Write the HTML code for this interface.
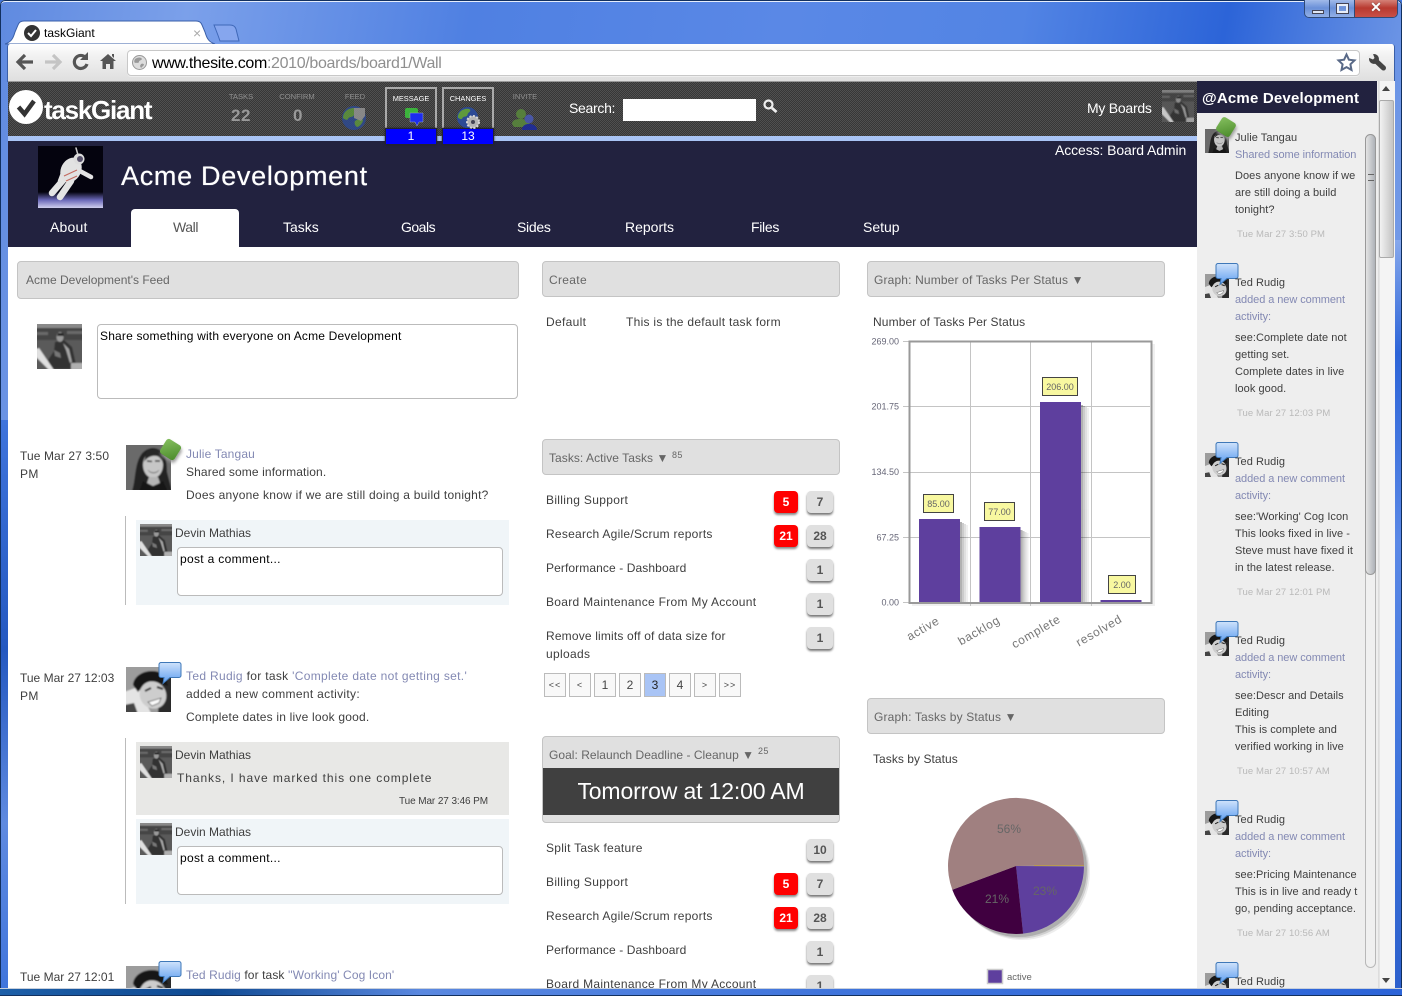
<!DOCTYPE html>
<html lang="en">
<head>
<meta charset="utf-8">
<title>taskGiant</title>
<style>
html,body{margin:0;padding:0;width:1402px;height:996px;overflow:hidden;background:#3f74dc}
*{box-sizing:border-box}
#frame{position:absolute;left:0;top:0;width:1402px;height:996px;overflow:hidden;
 background:linear-gradient(100deg,#5f8ae0 0,#7ba0ea 12%,#4f80e2 30%,#5a88e6 50%,#5284e4 65%,#2c64d8 78%,#6f97e6 90%,#86a8ec 100%);
 border-radius:5px 5px 0 0;box-shadow:inset 0 0 0 1px #12305f,inset 0 2px 0 #e6eefc}
#sideL{position:absolute;left:0;top:420px;width:8px;height:576px;background:linear-gradient(180deg,#3f74dc,#2458c0 40%,#5f8ae0 70%,#3f74dc);border-left:1px solid #12305f}
#sideR{position:absolute;left:1395px;top:240px;width:7px;height:756px;background:linear-gradient(180deg,#86a8ec,#2c64d8 15%,#5a88e6 40%,#3f74dc 70%,#2b5fcc);border-right:1px solid #12305f}
#bottom{position:absolute;left:0;top:988px;width:1402px;height:8px;background:linear-gradient(90deg,#1d5fa8,#0f4a92 15%,#5a88e0 30%,#3f74dc 60%,#2c64d8);border-top:1px solid #c8d0dc;border-bottom:1px solid #12305f}
#clip{position:absolute;left:0;top:0;width:1395px;height:988px;overflow:hidden}
.a{position:absolute}
.t{position:absolute;white-space:nowrap;font:12px/16px "Liberation Sans",sans-serif;letter-spacing:.32px;color:#3e3e3e}
.l{color:#8389b3}
.w{color:#fff}
.k{color:#000}
.g{color:#666}
.h{position:absolute;background:#e0e0e0;border:1px solid #c4c4c4;border-radius:4px}
.ta{position:absolute;background:#fff;border:1px solid #bbb;border-radius:4px}
.b{position:absolute;width:26px;height:22px;border-radius:4px;background:#e0e0e0;box-shadow:0 2px 2px #777;text-align:center;font:bold 12px/22px "Liberation Sans",sans-serif;color:#555}
.r{width:24px;background:#f00;color:#fff;box-shadow:0 2px 2px #888}
.p{position:absolute;top:673px;width:22px;height:24px;background:#f8f8f8;border:1px solid #bbb;text-align:center;font:12px/22px "Liberation Sans",sans-serif;color:#444}
.p.q{font-size:9px;letter-spacing:1px}
.tab{position:absolute;top:219px;font:14px/16px "Liberation Sans",sans-serif;color:#fff;white-space:nowrap}
.nl{position:absolute;top:92px;font:7.6px/9px "Liberation Sans",sans-serif;color:#8f8f8f;text-align:center;width:60px}
.nv{position:absolute;top:107px;font:bold 17px/18px "Liberation Sans",sans-serif;color:#999;text-align:center;width:60px;letter-spacing:.5px}
.box{position:absolute;top:87px;width:52px;height:58px;border:2px solid #aaa;border-bottom:0}
.box span{position:absolute;left:-2px;top:5px;width:52px;text-align:center;font:7.4px/10px "Liberation Sans",sans-serif;color:#fff}
.box b{position:absolute;left:-2px;bottom:0;width:52px;height:17px;background:#00f;border:1px solid #223;color:#fff;font:12px/15px "Liberation Sans",sans-serif;text-align:center;box-shadow:0 0 2px #222}
.d{position:absolute;left:1237px;font:9.5px/12px "Liberation Sans",sans-serif;letter-spacing:.1px;color:#b9b9b9;white-space:nowrap;margin-top:1px}
.s,.m{position:absolute;left:1235px;white-space:nowrap;font:11px/16px "Liberation Sans",sans-serif;letter-spacing:.05px;color:#3e3e3e;margin-top:1px}
.m{color:#8389b3;letter-spacing:-.07px}
svg{position:absolute;overflow:visible}
</style>
</head>
<body>
<svg width="0" height="0" style="position:absolute">
<defs>
<filter id="soft" x="-5%" y="-5%" width="110%" height="110%"><feGaussianBlur stdDeviation=".7"/></filter>
<clipPath id="sq"><rect width="45" height="45"/></clipPath>
<symbol id="devin" viewBox="0 0 45 45">
<g clip-path="url(#sq)"><g filter="url(#soft)">
<rect x="-2" y="-2" width="50" height="50" fill="#5a5a5a"/>
<rect x="-2" y="-2" width="50" height="6" fill="#8a8a8a"/>
<rect x="-2" y="4" width="50" height="12" fill="#444"/>
<path d="M18 18l9-2 8 7 5 22H14l-3-9 6-9z" fill="#303030"/>
<ellipse cx="23" cy="13" rx="3.500" ry="5" fill="#9a9a9a"/>
<path d="M21 9h5l1 3h-7z" fill="#222"/>
<path d="M26 19l6 6 3 13-2 1-4-13z" fill="#a6a6a6"/>
<path d="M17 26l6 3 1 5-6-2z" fill="#777"/>
<path d="M-1 25l3-1 15 22h-5L-1 33z" fill="#e0e0e0"/>
<path d="M34 39h12v7H34z" fill="#b0b0b0"/>
<path d="M-1 8h12v3H-1zM30 7h16v3H30z" fill="#6a6a6a"/>
</g></g>
</symbol>
<symbol id="julie" viewBox="0 0 45 45">
<g clip-path="url(#sq)"><g filter="url(#soft)">
<rect x="-2" y="-2" width="50" height="50" fill="#6a6a6a"/>
<path d="M6 46C11 32 7 6 26 3c14 0 15 14 15 24l5 19z" fill="#222"/>
<ellipse cx="27" cy="20" rx="10" ry="13" fill="#c6c6c6"/>
<path d="M18 17c3-5 10-8 15-5 2 2 3 3 4 6l2-8-8-6-10 2z" fill="#282828"/>
<path d="M21 16l5 .5M29 16h5" stroke="#333" stroke-width="1.600"/>
<path d="M22 25c3 3.500 8 3.500 11 0-2 4-9 4-11 0z" fill="#fff" stroke="#555" stroke-width=".5"/>
<path d="M23 32h9l2 6-7 3-6-3z" fill="#b4b4b4"/>
<path d="M13 47l4-11 10 6 10-6 5 11z" fill="#151515"/>
</g></g>
</symbol>
<symbol id="ted" viewBox="0 0 45 45">
<g clip-path="url(#sq)"><g filter="url(#soft)">
<rect x="-2" y="-2" width="50" height="50" fill="#9c9c9c"/>
<path d="M-2 25l14-5 14 28H-2z" fill="#e4e4e4"/>
<path d="M-2 38l10-2 4 11H-2z" fill="#444"/>
<path d="M34 8l14 2v38H32z" fill="#2c2c2c"/>
<path d="M7 18C8 5 28-1 40 9l2 10-14-4-12 5-4 5z" fill="#161616"/>
<ellipse cx="27" cy="28" rx="13" ry="14" fill="#cdcdcd" transform="rotate(-35 27 28)"/>
<path d="M15 17c6-6 18-6 24 1l-4-8-14-2z" fill="#161616"/>
<path d="M19 24l6-3M31 20l6 2" stroke="#222" stroke-width="2"/>
<path d="M22 35l13-4-2 5-7 3z" fill="#fafafa" stroke="#444" stroke-width=".7"/>
</g></g>
</symbol>
<linearGradient id="bub" x1="0" y1="0" x2="0" y2="1"><stop offset="0" stop-color="#cfe2fb"/><stop offset="1" stop-color="#5d9df0"/></linearGradient>
<symbol id="bubble" viewBox="0 0 24 24">
<path d="M3 1.500h18a2 2 0 0 1 2 2v11a2 2 0 0 1-2 2h-9l-7 6 1-6H3a2 2 0 0 1-2-2v-11a2 2 0 0 1 2-2z" fill="url(#bub)" stroke="#3f78b8"/>
</symbol>
<symbol id="globe" viewBox="0 0 24 24">
<circle cx="12" cy="12" r="12" fill="#2c4a95"/>
<path d="M4 5c3-3 9-4 11-2 1 3-3 3-3 6-1 3-5 1-6 4-1 2-4 0-5-1 0-3 1-5 3-7zM13 15c3-2 7-3 8-1 0 3-4 7-6 7-2-1-3-4-2-6z" fill="#5f9a3c"/>
</symbol>
</defs>
</svg>

<div id="frame">
<div id="sideL"></div><div id="sideR"></div><div id="bottom"></div>

<!-- window controls -->
<div class="a" style="left:1304px;top:-1px;width:94px;height:19px;border:1px solid #2f4a78;border-top:0;border-radius:0 0 5px 5px;overflow:hidden;display:flex;background:#5b85d8">
<div style="width:25px;background:linear-gradient(#a8c0ec,#6a90d8 50%,#92b0e6);border-right:1px solid #2f4a78;position:relative"><i class="a" style="left:7px;top:11px;width:12px;height:4px;background:#dfe6f4;border:1px solid #445"></i></div>
<div style="width:25px;background:linear-gradient(#a8c0ec,#6a90d8 50%,#92b0e6);border-right:1px solid #2f4a78;position:relative"><i class="a" style="left:7px;top:5px;width:11px;height:9px;border:2px solid #e8eef8;outline:1px solid #445"></i></div>
<div style="flex:1;background:linear-gradient(#d88a80,#b83a30 50%,#c85048);text-align:center;font:bold 14px/17px 'Liberation Sans',sans-serif;color:#fff;text-shadow:0 0 1px #333">✕</div>
</div>

<!-- tabs -->
<svg style="left:0;top:0" width="260" height="46">
<path d="M5 44c6-2 8-5 10-12l3-7c1-3 3-4 6-4h172c3 0 5 1 6 4l3 7c2 7 4 10 10 12z" fill="#fff" stroke="#3a5fa8"/>
<path d="M214 25h16c3 0 5 1 6 4l3 12h-19c-2-6-4-11-6-16z" fill="#86a6ee" stroke="#3f68b8"/>
<circle cx="32" cy="33" r="8" fill="#333"/><path d="M28 33l3 3 5-6" fill="none" stroke="#fff" stroke-width="2"/>
</svg>
<div class="t k" style="left:44px;top:25px;letter-spacing:0">taskGiant</div>
<div class="t" style="left:193px;top:25px;color:#aaa;font-size:14px">×</div>

<!-- toolbar -->
<div class="a" style="left:7px;top:44px;width:1388px;height:38px;background:linear-gradient(#fff,#f2f2f2 30%,#dedede);border:1px solid #3a5fa8;border-bottom:0;border-radius:3px 3px 0 0;border-top:0"></div>
<svg style="left:0;top:44px" width="1402" height="38">
<g fill="none" stroke-width="3.200">
<path d="M33 18H20M25 11l-7 7 7 7" stroke="#555"/>
<path d="M45 18h13M53 11l7 7-7 7" stroke="#c4c4c4"/>
<path d="M86 14a6.500 6.500 0 1 0 1 6" stroke="#555"/>
</g>
<path d="M88 8v8h-8z" fill="#555"/>
<path d="M108 10l8 7h-2.500v8h-3.500v-5h-4v5h-3.500v-8H100z M112 10h2v4l-2-2z" fill="#555"/>
<path d="M1376 17l7.500 7" stroke="#444" stroke-width="5" stroke-linecap="round"/>
<circle cx="1374" cy="15" r="5" fill="#444"/>
<path d="M1367 13l6 2.500 1.500-1.500-2-5.500z" fill="#ededed"/>
</svg>
<div class="a" style="left:127px;top:50px;width:1233px;height:26px;background:#fff;border:1px solid #c8c8c8;border-radius:4px;box-shadow:0 1px 0 #eee"></div>
<svg style="left:132px;top:55px" width="15" height="15"><circle cx="7.500" cy="7.500" r="7" fill="#ddd" stroke="#999"/><path d="M3 4c3-2 6-2 7 0-1 2-3 1-3 3-1 2-3 0-4 1-1-1-1-2 0-4zM9 9c2-1 3 0 3 1l-3 3-1-2z" fill="#999"/></svg>
<div class="a" style="left:152px;top:54px;white-space:nowrap;font:16px/20px 'Liberation Sans',sans-serif;letter-spacing:-.34px;color:#8f8f8f"><span style="color:#000">www.thesite.com</span>:2010/boards/board1/Wall</div>
<svg style="left:1337px;top:53px" width="19" height="18"><path d="M9.500 1.500l2.400 5.200 5.600.7-4.100 3.900 1.100 5.600-5-2.800-5 2.800 1.100-5.600L1.500 7.400l5.600-.7z" fill="#fff" stroke="#5a6a88" stroke-width="2"/></svg>

<div id="clip">
<!-- page white -->
<div class="a" style="left:8px;top:81px;width:1387px;height:907px;background:#fff"></div>

<!-- header -->
<div class="a" style="left:8px;top:81px;width:1189px;height:55px;background:repeating-conic-gradient(#373737 0 25%,#505050 0 50%) 0 0/2px 2px;border-top:1px solid #999"></div>
<div class="a" style="left:8px;top:136px;width:1189px;height:5px;background:#a9c4f5"></div>
<div class="a" style="left:8px;top:141px;width:1189px;height:106px;background:#22223f"></div>

<!-- logo -->
<svg style="left:9px;top:90px" width="34" height="34"><circle cx="17" cy="17" r="17" fill="#fff"/><path d="M9.500 17l6 7 9.500-13" fill="none" stroke="#333" stroke-width="4.500"/></svg>
<div class="t w" style="left:44px;top:95px;font:bold 26px/30px 'Liberation Sans',sans-serif;letter-spacing:-1.25px">taskGiant</div>

<!-- nav -->
<div class="nl" style="left:211px">TASKS</div><div class="nv" style="left:211px">22</div>
<div class="nl" style="left:267px">CONFIRM</div><div class="nv" style="left:268px">0</div>
<div class="nl" style="left:325px">FEED</div>
<svg style="left:342px;top:106px;opacity:.8" width="24" height="24"><use href="#globe" width="24" height="24"/><path d="M12 2h11v8l-4 5-7-3z" fill="#999"/></svg>
<div class="box" style="left:385px"><span>MESSAGE</span><b>1</b></div>
<svg style="left:404px;top:107px" width="20" height="20"><rect x="1" y="1" width="13" height="10" rx="2" fill="#3cb33c"/><path d="M6 6h13v9h-4l-2 4-2-4H6z" fill="#1c2cf0" stroke="#9ab" stroke-width=".5"/></svg>
<div class="box" style="left:442px"><span>CHANGES</span><b>13</b></div>
<svg style="left:457px;top:107px" width="24" height="21"><use href="#globe" width="21" height="21"/><circle cx="16" cy="15" r="6" fill="#b4b4b4" stroke="#d8d8d8" stroke-width="2" stroke-dasharray="2 1.500"/><circle cx="16" cy="15" r="2" fill="#445"/></svg>
<div class="nl" style="left:495px">INVITE</div>
<svg style="left:512px;top:108px;opacity:.85" width="26" height="24"><circle cx="9" cy="6" r="5" fill="#5a8a3c"/><path d="M0 16c0-4 4-5 9-5s8 2 8 5l-1 3H2z" fill="#5a8a3c"/><circle cx="17" cy="11" r="4.500" fill="#4a5ab8"/><path d="M10 22c0-4 3-6 7-6s8 2 8 6z" fill="#1b2aa0"/></svg>

<div class="t w" style="left:569px;top:100px;font-size:14px;letter-spacing:-.3px">Search:</div>
<div class="a" style="left:623px;top:99px;width:133px;height:22px;background:#fff"></div>
<svg style="left:763px;top:99px" width="15" height="15"><circle cx="5.500" cy="5.500" r="4" fill="none" stroke="#eee" stroke-width="2.200"/><path d="M9 9l4.500 4" stroke="#eee" stroke-width="2.800"/></svg>
<div class="t w" style="left:1087px;top:100px;font-size:14px;letter-spacing:-.25px">My Boards</div>
<svg style="left:1162px;top:90px;opacity:.85" width="32" height="32"><use href="#devin" width="32" height="32"/></svg>

<div class="t w" style="left:1055px;top:142px;font-size:14px;letter-spacing:-.1px">Access: Board Admin</div>

<!-- project -->
<svg style="left:38px;top:146px" width="65" height="62">
<defs><linearGradient id="earth" x1="0" y1="0" x2="0" y2="1"><stop offset="0" stop-color="#04030e"/><stop offset=".5" stop-color="#6a68b8"/><stop offset="1" stop-color="#cfcfee"/></linearGradient></defs>
<rect width="65" height="62" fill="#04030e"/>
<rect y="46" width="65" height="16" fill="url(#earth)"/>
<g fill="none" stroke="#e4e4e4" stroke-linecap="round">
<path d="M38 2l2 7" stroke="#ccc" stroke-width="1.500"/>
<path d="M27 32L14 47" stroke-width="6.500"/><path d="M33 35L22 51" stroke-width="6.500"/>
<path d="M40 24l13 7" stroke-width="4.500"/><path d="M27 22l-5 13" stroke-width="4.500"/>
</g>
<ellipse cx="33" cy="24" rx="10" ry="13" fill="#e2e2e2" transform="rotate(28 33 24)"/>
<circle cx="41" cy="13" r="5.500" fill="#ddd"/><circle cx="42" cy="13" r="3" fill="#56506a"/>
<path d="M26 30l13-6M28 35l11-5" stroke="#c36a60" stroke-width="1.200"/>
</svg>
<div class="t w" style="left:121px;top:160px;font:27px/32px 'Liberation Sans',sans-serif;letter-spacing:.7px;text-shadow:0 0 .6px #fff">Acme Development</div>

<!-- tabs nav -->
<div class="a" style="left:131px;top:209px;width:108px;height:38px;background:#fff;border-radius:4px 4px 0 0"></div>
<div class="tab" style="left:50px;letter-spacing:.2px">About</div>
<div class="tab" style="left:173px;color:#555;letter-spacing:-.4px">Wall</div>
<div class="tab" style="left:283px">Tasks</div>
<div class="tab" style="left:401px;letter-spacing:-.5px">Goals</div>
<div class="tab" style="left:517px;letter-spacing:-.3px">Sides</div>
<div class="tab" style="left:625px">Reports</div>
<div class="tab" style="left:751px;letter-spacing:-.3px">Files</div>
<div class="tab" style="left:863px">Setup</div>

<!-- col1 -->
<div class="h" style="left:17px;top:261px;width:502px;height:38px"></div>
<div class="t g" style="left:26px;top:272px;letter-spacing:0">Acme Development's Feed</div>
<svg style="left:37px;top:324px" width="45" height="45"><use href="#devin" width="45" height="45"/></svg>
<div class="ta" style="left:97px;top:324px;width:421px;height:75px"></div>
<div class="t k" style="left:100px;top:328px;letter-spacing:.19px">Share something with everyone on Acme Development</div>

<!-- item 1 -->
<div class="t" style="left:20px;top:448px;letter-spacing:.1px">Tue Mar 27 3:50</div><div class="t" style="left:20px;top:466px">PM</div>
<svg style="left:126px;top:445px" width="45" height="45"><use href="#julie" width="45" height="45"/></svg>
<div class="a" style="left:162px;top:441px;width:17px;height:17px;border-radius:3px;background:linear-gradient(135deg,#86c060,#4a8a2a);transform:rotate(32deg);box-shadow:2px 2px 3px #999"></div>
<div class="t l" style="left:186px;top:446px;letter-spacing:.15px">Julie Tangau</div>
<div class="t" style="left:186px;top:464px;letter-spacing:.12px">Shared some information.</div>
<div class="t" style="left:186px;top:487px;letter-spacing:.25px">Does anyone know if we are still doing a build tonight?</div>
<div class="a" style="left:125px;top:516px;width:1px;height:89px;background:#bbb"></div>
<div class="a" style="left:136px;top:520px;width:373px;height:85px;background:#f0f5f8"></div>
<svg style="left:140px;top:524px" width="32" height="32"><use href="#devin" width="32" height="32"/></svg>
<div class="t" style="left:175px;top:525px;letter-spacing:0">Devin Mathias</div>
<div class="ta" style="left:177px;top:547px;width:326px;height:49px"></div>
<div class="t k" style="left:180px;top:551px">post a comment...</div>

<!-- item 2 -->
<div class="t" style="left:20px;top:670px;letter-spacing:0">Tue Mar 27 12:03</div><div class="t" style="left:20px;top:688px">PM</div>
<svg style="left:126px;top:667px" width="45" height="45"><use href="#ted" width="45" height="45"/></svg>
<svg style="left:158px;top:661px" width="24" height="24"><use href="#bubble" width="24" height="24"/></svg>
<div class="t" style="left:186px;top:668px"><span class="l">Ted Rudig</span> for task <span class="l">'Complete date not getting set.'</span></div>
<div class="t" style="left:186px;top:686px">added a new comment activity:</div>
<div class="t" style="left:186px;top:709px;letter-spacing:.2px">Complete dates in live look good.</div>
<div class="a" style="left:125px;top:738px;width:1px;height:166px;background:#bbb"></div>
<div class="a" style="left:136px;top:742px;width:373px;height:73px;background:#e8e8e6"></div>
<svg style="left:140px;top:746px" width="32" height="32"><use href="#devin" width="32" height="32"/></svg>
<div class="t" style="left:175px;top:747px;letter-spacing:0">Devin Mathias</div>
<div class="t" style="left:177px;top:770px;letter-spacing:.92px">Thanks, I have marked this one complete</div>
<div class="t" style="left:399px;top:794px;font-size:10px;letter-spacing:-.1px">Tue Mar 27 3:46 PM</div>
<div class="a" style="left:136px;top:819px;width:373px;height:85px;background:#f0f5f8"></div>
<svg style="left:140px;top:823px" width="32" height="32"><use href="#devin" width="32" height="32"/></svg>
<div class="t" style="left:175px;top:824px;letter-spacing:0">Devin Mathias</div>
<div class="ta" style="left:177px;top:846px;width:326px;height:49px"></div>
<div class="t k" style="left:180px;top:850px">post a comment...</div>

<!-- item 3 -->
<div class="t" style="left:20px;top:969px;letter-spacing:0">Tue Mar 27 12:01</div>
<svg style="left:126px;top:966px" width="45" height="45"><use href="#ted" width="45" height="45"/></svg>
<svg style="left:158px;top:960px" width="24" height="24"><use href="#bubble" width="24" height="24"/></svg>
<div class="t" style="left:186px;top:967px;letter-spacing:.1px"><span class="l">Ted Rudig</span> for task <span class="l">''Working' Cog Icon'</span></div>

<!-- col2 -->
<div class="h" style="left:542px;top:261px;width:298px;height:36px"></div>
<div class="t g" style="left:549px;top:272px">Create</div>
<div class="t" style="left:546px;top:314px">Default</div>
<div class="t" style="left:626px;top:314px;letter-spacing:.28px">This is the default task form</div>

<div class="h" style="left:542px;top:439px;width:298px;height:36px"></div>
<div class="t g" style="left:549px;top:450px;letter-spacing:.05px">Tasks: Active Tasks ▼</div>
<div class="t g" style="left:672px;top:447px;font-size:9px">85</div>

<div class="t" style="left:546px;top:492px">Billing Support</div>
<div class="b r" style="left:774px;top:491px">5</div><div class="b" style="left:807px;top:491px">7</div>
<div class="t" style="left:546px;top:526px;letter-spacing:.26px">Research Agile/Scrum reports</div>
<div class="b r" style="left:774px;top:525px">21</div><div class="b" style="left:807px;top:525px">28</div>
<div class="t" style="left:546px;top:560px;letter-spacing:.1px">Performance - Dashboard</div>
<div class="b" style="left:807px;top:559px">1</div>
<div class="t" style="left:546px;top:594px;letter-spacing:.29px">Board Maintenance From My Account</div>
<div class="b" style="left:807px;top:593px">1</div>
<div class="t" style="left:546px;top:628px;letter-spacing:.17px">Remove limits off of data size for</div>
<div class="t" style="left:546px;top:646px">uploads</div>
<div class="b" style="left:807px;top:627px">1</div>

<div class="p q" style="left:544px">&lt;&lt;</div><div class="p q" style="left:569px">&lt;</div>
<div class="p" style="left:594px">1</div><div class="p" style="left:619px">2</div>
<div class="p" style="left:644px;background:#a9c4f5;color:#222">3</div>
<div class="p" style="left:669px">4</div>
<div class="p q" style="left:694px">&gt;</div><div class="p q" style="left:719px">&gt;&gt;</div>

<div class="h" style="left:542px;top:736px;width:298px;height:87px"></div>
<div class="t g" style="left:549px;top:747px;letter-spacing:.03px">Goal: Relaunch Deadline - Cleanup ▼</div>
<div class="t g" style="left:758px;top:743px;font-size:9px">25</div>
<div class="a" style="left:543px;top:768px;width:296px;height:47px;background:#404040;color:#fff;text-align:center;font:23px/47px 'Liberation Sans',sans-serif;letter-spacing:-.15px">Tomorrow at 12:00 AM</div>

<div class="t" style="left:546px;top:840px;letter-spacing:.27px">Split Task feature</div>
<div class="b" style="left:807px;top:839px">10</div>
<div class="t" style="left:546px;top:874px">Billing Support</div>
<div class="b r" style="left:774px;top:873px">5</div><div class="b" style="left:807px;top:873px">7</div>
<div class="t" style="left:546px;top:908px;letter-spacing:.26px">Research Agile/Scrum reports</div>
<div class="b r" style="left:774px;top:907px">21</div><div class="b" style="left:807px;top:907px">28</div>
<div class="t" style="left:546px;top:942px;letter-spacing:.1px">Performance - Dashboard</div>
<div class="b" style="left:807px;top:941px">1</div>
<div class="t" style="left:546px;top:976px;letter-spacing:.29px">Board Maintenance From My Account</div>
<div class="b" style="left:807px;top:975px">1</div>

<!-- col3 -->
<div class="h" style="left:867px;top:261px;width:298px;height:36px"></div>
<div class="t g" style="left:874px;top:272px;letter-spacing:.15px">Graph: Number of Tasks Per Status ▼</div>
<div class="t" style="left:873px;top:314px;letter-spacing:.12px">Number of Tasks Per Status</div>
<div class="h" style="left:867px;top:698px;width:298px;height:36px"></div>
<div class="t g" style="left:874px;top:709px;letter-spacing:.15px">Graph: Tasks by Status ▼</div>
<div class="t" style="left:873px;top:751px;letter-spacing:.05px">Tasks by Status</div>

<svg style="left:0;top:0" width="1402" height="996" font-family="Liberation Sans, sans-serif">
<rect x="912" y="344" width="243" height="262" fill="#000" opacity=".06"/>
<rect x="910" y="342" width="241" height="260" fill="#fff"/>
<g stroke="#c4c4c4" stroke-width="1">
<path d="M970.500 342V606M1030.500 342V606M1091.500 342V606"/>
<path d="M903 406.500H1150M903 472.500H1150M903 537.500H1150M903 341.500H910M903 602.500H910" />
</g>
<g fill="#000">
<g opacity=".3"><rect x="960" y="522" width="2" height="81"/><rect x="1020.500" y="530" width="2" height="73"/><rect x="1081" y="405" width="2" height="198"/></g>
<g opacity=".2"><rect x="962" y="523" width="2" height="80"/><rect x="1022.500" y="531" width="2" height="72"/><rect x="1083" y="406" width="2" height="197"/></g>
<g opacity=".12"><rect x="964" y="524" width="2" height="79"/><rect x="1024.500" y="532" width="2" height="71"/><rect x="1085" y="407" width="2" height="196"/></g>
<g opacity=".06"><rect x="966" y="525" width="2" height="78"/><rect x="1026.500" y="533" width="2" height="70"/><rect x="1087" y="408" width="2" height="195"/></g>
</g>
<g fill="#5e3f9e">
<rect x="919" y="519" width="41" height="84"/><rect x="979.500" y="527" width="41" height="76"/><rect x="1040" y="402" width="41" height="201"/><rect x="1100.500" y="600" width="41" height="3"/>
</g>
<rect x="909.500" y="341.500" width="242" height="261.500" fill="none" stroke="#999" stroke-width="2"/>
<g fill="#f8f8a0" stroke="#444">
<rect x="923.500" y="494.500" width="30" height="18"/><rect x="984.500" y="502.500" width="30" height="18"/><rect x="1042.500" y="377.500" width="35" height="18"/><rect x="1108.500" y="575.500" width="27" height="18"/>
</g>
<g font-size="9" fill="#666" text-anchor="middle">
<text x="938.500" y="507">85.00</text><text x="999.500" y="515">77.00</text><text x="1060" y="390">206.00</text><text x="1122" y="588">2.00</text>
</g>
<g font-size="9" fill="#667" text-anchor="end">
<text x="899" y="344.500">269.00</text><text x="899" y="409.500">201.75</text><text x="899" y="475">134.50</text><text x="899" y="540.500">67.25</text><text x="899" y="605.500">0.00</text>
</g>
<g font-size="12" fill="#777" text-anchor="middle" letter-spacing=".7">
<text transform="translate(925 632) rotate(-30)">active</text>
<text transform="translate(981 634) rotate(-30)">backlog</text>
<text transform="translate(1038 635) rotate(-30)">complete</text>
<text transform="translate(1101 634) rotate(-30)">resolved</text>
</g>
<!-- pie -->
<circle cx="1022" cy="872" r="68" fill="#000" opacity=".07"/><circle cx="1020.500" cy="870.500" r="68" fill="#000" opacity=".12"/><circle cx="1019" cy="869" r="68" fill="#000" opacity=".16"/>
<path d="M1016 866L1084 866.500A68 68 0 0 1 1023.100 933.600Z" fill="#5e3f9e"/>
<path d="M1016 866L1023.100 933.600A68 68 0 0 1 952.300 889.700Z" fill="#400040"/>
<path d="M1016 866L952.300 889.700A68 68 0 1 1 1084 865Z" fill="#a08080"/>
<path d="M1034 865.500H1084" stroke="#b89a50" stroke-width="1"/>
<g font-size="12" fill="#666" text-anchor="middle"><text x="1009" y="833">56%</text><text x="997" y="903">21%</text><text x="1045" y="895">23%</text></g>
<rect x="987.500" y="969.500" width="15" height="14" fill="#5e3f9e" stroke="#ccc" stroke-width="1.500"/>
<text x="1007" y="980" font-size="9.500" fill="#666">active</text>
</svg>

<!-- right panel -->
<div class="a" style="left:1197px;top:81px;width:182px;height:907px;background:#eee;border-right:1px solid #ddd"></div>
<div class="a" style="left:1197px;top:81px;width:180px;height:32px;background:#22223f"></div>
<div class="t w" style="left:1202px;top:90px;font:bold 15px/18px 'Liberation Sans',sans-serif;letter-spacing:.2px">@Acme Development</div>
<!-- inner scroll -->
<div class="a" style="left:1365px;top:134px;width:11px;height:834px;background:#f0f0f0;border:1px solid #b8b8b8;border-radius:6px"></div>
<div class="a" style="left:1365px;top:134px;width:11px;height:441px;background:linear-gradient(90deg,#e4e4e4,#aeb2b8);border:1px solid #999;border-radius:6px"></div>
<div class="a" style="left:1368px;top:174px;width:6px;height:7px;border-top:1px solid #666;border-bottom:1px solid #666"></div>
<!-- outer scroll -->
<div class="a" style="left:1379px;top:81px;width:16px;height:907px;background:#f4f4f4;border-left:1px solid #e4e4e4"></div>
<div class="a" style="left:1379px;top:100px;width:15px;height:158px;background:linear-gradient(90deg,#f2f2f2,#c4c4c4);border:1px solid #aaa;border-radius:2px"></div>
<div class="a" style="left:1382px;top:86px;border:4px solid transparent;border-bottom:5px solid #444;border-top:0"></div>
<div class="a" style="left:1382px;top:978px;border:4px solid transparent;border-top:5px solid #444;border-bottom:0"></div>

<svg style="left:1205px;top:129px" width="24" height="24"><use href="#julie" width="24" height="24"/></svg>
<div class="a" style="left:1218px;top:119px;width:16px;height:16px;border-radius:3px;background:linear-gradient(135deg,#86c060,#4a8a2a);transform:rotate(32deg);box-shadow:2px 2px 3px #999"></div>
<div class="s" style="top:129px">Julie Tangau</div>
<div class="m" style="top:146px">Shared some information</div>
<div class="s" style="top:167px">Does anyone know if we</div>
<div class="s" style="top:184px">are still doing a build</div>
<div class="s" style="top:201px">tonight?</div>
<div class="d" style="top:228px">Tue Mar 27 3:50 PM</div>

<svg style="left:1205px;top:274px" width="24" height="24"><use href="#ted" width="24" height="24"/></svg>
<svg style="left:1215px;top:262px" width="24" height="24"><use href="#bubble" width="24" height="24"/></svg>
<div class="s" style="top:274px">Ted Rudig</div>
<div class="m" style="top:291px">added a new comment</div>
<div class="m" style="top:308px">activity:</div>
<div class="s" style="top:329px">see:Complete date not</div>
<div class="s" style="top:346px">getting set.</div>
<div class="s" style="top:363px">Complete dates in live</div>
<div class="s" style="top:380px">look good.</div>
<div class="d" style="top:407px">Tue Mar 27 12:03 PM</div>

<svg style="left:1205px;top:453px" width="24" height="24"><use href="#ted" width="24" height="24"/></svg>
<svg style="left:1215px;top:441px" width="24" height="24"><use href="#bubble" width="24" height="24"/></svg>
<div class="s" style="top:453px">Ted Rudig</div>
<div class="m" style="top:470px">added a new comment</div>
<div class="m" style="top:487px">activity:</div>
<div class="s" style="top:508px">see:'Working' Cog Icon</div>
<div class="s" style="top:525px">This looks fixed in live -</div>
<div class="s" style="top:542px">Steve must have fixed it</div>
<div class="s" style="top:559px">in the latest release.</div>
<div class="d" style="top:586px">Tue Mar 27 12:01 PM</div>

<svg style="left:1205px;top:632px" width="24" height="24"><use href="#ted" width="24" height="24"/></svg>
<svg style="left:1215px;top:620px" width="24" height="24"><use href="#bubble" width="24" height="24"/></svg>
<div class="s" style="top:632px">Ted Rudig</div>
<div class="m" style="top:649px">added a new comment</div>
<div class="m" style="top:666px">activity:</div>
<div class="s" style="top:687px">see:Descr and Details</div>
<div class="s" style="top:704px">Editing</div>
<div class="s" style="top:721px">This is complete and</div>
<div class="s" style="top:738px">verified working in live</div>
<div class="d" style="top:765px">Tue Mar 27 10:57 AM</div>

<svg style="left:1205px;top:811px" width="24" height="24"><use href="#ted" width="24" height="24"/></svg>
<svg style="left:1215px;top:799px" width="24" height="24"><use href="#bubble" width="24" height="24"/></svg>
<div class="s" style="top:811px">Ted Rudig</div>
<div class="m" style="top:828px">added a new comment</div>
<div class="m" style="top:845px">activity:</div>
<div class="s" style="top:866px">see:Pricing Maintenance</div>
<div class="s" style="top:883px">This is in live and ready t</div>
<div class="s" style="top:900px">go, pending acceptance.</div>
<div class="d" style="top:927px">Tue Mar 27 10:56 AM</div>

<svg style="left:1205px;top:973px" width="24" height="24"><use href="#ted" width="24" height="24"/></svg>
<svg style="left:1215px;top:961px" width="24" height="24"><use href="#bubble" width="24" height="24"/></svg>
<div class="s" style="top:973px">Ted Rudig</div>
</div>
</div>
</body>
</html>
